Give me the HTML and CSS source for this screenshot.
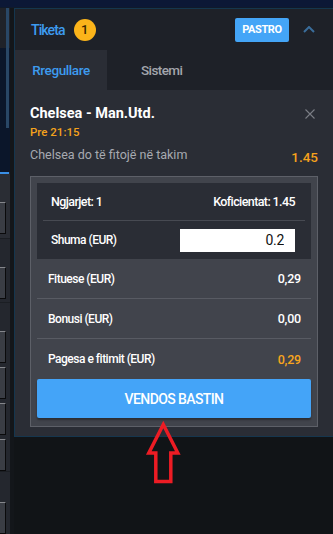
FILE: index.html
```html
<!DOCTYPE html>
<html lang="sq">
<head>
<meta charset="utf-8">
<title>Tiketa</title>
<link rel="stylesheet" href="styles.css">
</head>
<body>
<div class="topbar"></div>
<div class="main">
  <aside class="side">
    <div class="s-top"><div class="s-scroll"></div></div>
    <div class="s-line"></div>
    <div class="s-sec s-sec1"><div class="s-box"></div></div>
    <div class="s-sec s-sec2"><div class="s-box"></div></div>
    <div class="s-sec s-sec3"><div class="s-box"></div><div class="s-box"></div><div class="s-box"></div><div class="s-box"></div></div>
    <div class="s-sec s-sec4"><div class="s-box"></div></div>
  </aside>
  <div class="gutter"></div>
  <div class="col">
    <section class="panel">
      <header class="p-head">
        <span class="p-title">Tiketa</span>
        <span class="badge">1</span>
        <span class="spacer"></span>
        <button class="btn-pastro">PASTRO</button>
        <svg class="chev" viewBox="0 0 12 7" width="12" height="7"><polyline points="1,6 6,1 11,6" fill="none" stroke="#3a6d9b" stroke-width="2"/></svg>
      </header>
      <nav class="tabs">
        <div class="tab active">Rregullare</div>
        <div class="tab tab2">Sistemi</div>
      </nav>
      <div class="content">
        <div class="ev-row">
          <div class="ev-info">
            <div class="ev-name">Chelsea - Man.Utd.</div>
            <div class="ev-time">Pre 21:15</div>
          </div>
          <svg class="close" viewBox="0 0 10 10" width="10" height="10"><path d="M0.5 0.5 L9.5 9.5 M9.5 0.5 L0.5 9.5" stroke="#7b7e86" stroke-width="1.1" fill="none"/></svg>
        </div>
        <div class="pick-row">
          <span class="pick">Chelsea do të fitojë në takim</span>
          <span class="odds">1.45</span>
        </div>
        <div class="slip">
          <div class="slip-top">
            <div class="srow srow-sum"><span>Ngjarjet: 1</span><span>Koficientat: 1.45</span></div>
            <div class="srow srow-stake"><span>Shuma (EUR)</span><input class="stake" type="text" value="0.2"></div>
          </div>
          <div class="lrow"><span>Fituese (EUR)</span><span class="val">0,29</span></div>
          <div class="lrow"><span>Bonusi (EUR)</span><span class="val">0,00</span></div>
          <div class="lrow last"><span>Pagesa e fitimit (EUR)</span><span class="val val-hl">0,29</span></div>
          <button class="place">VENDOS BASTIN</button>
        </div>
      </div>
    </section>
  </div>
</div>
<svg class="arrow" viewBox="0 0 40 66" width="40" height="66"><polygon points="19.3,4.5 4.8,33 11.8,33 11.8,61.5 26.8,61.5 26.8,33 33.8,33" fill="none" stroke="#ed1c24" stroke-width="3.5" stroke-linejoin="miter"/></svg>
</body>
</html>
```
FILE: styles.css
```css
* { box-sizing: border-box; }
html, body { margin: 0; padding: 0; }
body {
  width: 333px;
  height: 534px;
  overflow: hidden;
  position: relative;
  background: #111417;
  font-family: Roboto, "Liberation Sans", sans-serif;
}
.topbar {
  height: 8px;
  background: #0c1836;
  box-shadow: inset 0 -1px 0 #101a2a;
}
.main { display: flex; height: 526px; }

/* left strip */
.side { width: 10px; display: flex; flex-direction: column; background: #24272e; }
.s-top {
  height: 167px;
  display: flex;
  background: linear-gradient(#1f2229 0 40px, #0b162a 40px);
}
.s-scroll { width: 3px; height: 120px; margin-left: 6px; background: #294766; }
.s-line { height: 2px; width: 9px; background: #3a8fe6; }
.s-sec { display: flex; flex-direction: column; gap: 4px; border-bottom: 1px solid #1b1e23; }
.s-sec1 { height: 65px; padding-top: 28px; background: #2a2d34; }
.s-sec2 { height: 65px; padding-top: 28px; background: #24272e; }
.s-sec3 { height: 171px; padding-top: 28px; background: #24272e; }
.s-sec4 { flex: 1; padding-top: 30px; background: #24272e; border-bottom: 0; }
.s-box {
  width: 6px;
  height: 32px;
  flex: none;
  background: #3a3d44;
  border: 1px solid #0a0a0b;
  border-left: 0;
  border-top-color: #85878c;
}
.gutter { width: 4px; background: #13161a; }
.col { flex: 1; display: flex; flex-direction: column; }

/* panel */
.panel { border: 1px solid #15364e; border-right: 0; }
.p-head {
  height: 41px;
  display: flex;
  align-items: center;
  padding: 0 18px 0 16px;
  background: #1e2128;
}
.p-title {
  font-size: 14px;
  font-weight: 500;
  letter-spacing: -0.9px;
  color: #3d9bef;
}
.badge {
  width: 22px;
  height: 22px;
  margin-left: 9px;
  border-radius: 50%;
  background: #fbb41a;
  display: flex;
  align-items: center;
  justify-content: center;
  font-weight: 500;
  font-size: 13px;
  color: #3b2800;
}
.spacer { flex: 1; }
.btn-pastro {
  width: 54px;
  height: 24px;
  margin-right: 14px;
  padding: 0;
  border: 0;
  border-radius: 2px;
  background: #44a5f7;
  color: #fff;
  font-family: Roboto, sans-serif;
  font-weight: bold;
  font-size: 11px;
  letter-spacing: -0.4px;
}
.chev { display: block; }

.tabs { height: 40px; display: flex; background: #1e2128; }
.tab {
  display: flex;
  align-items: center;
  font-size: 13.5px;
  font-weight: 500;
  letter-spacing: -0.4px;
  color: #a3a6ad;
}
.tab.active { width: 92px; justify-content: center; background: #2a2d35; color: #3d9bef; }
.tab2 { padding-left: 34px; letter-spacing: -0.6px; }

.content { background: #2a2d35; padding: 15px 15px 9px; }
.ev-row { display: flex; justify-content: space-between; align-items: flex-start; }
.ev-name { font-weight: 700; font-size: 14.5px; line-height: 18px; color: #fff; }
.ev-time { margin-top: 1px; font-weight: 500; font-size: 11.5px; line-height: 16px; color: #f4a21c; }
.close { display: block; margin: 4px 3px 0 0; }

.pick-row { margin-top: 6px; height: 20px; display: flex; justify-content: space-between; }
.pick { align-self: flex-start; font-size: 12.5px; line-height: 18px; color: #a7aab1; }
.odds { align-self: flex-end; font-weight: 500; font-size: 13.5px; line-height: 18px; color: #f6a21c; }

.slip {
  margin-top: 10px;
  border: 1px solid #5d6068;
  background: #41444c;
  padding: 6px 6px 8px;
  color: #fff;
}
.slip-top { background: #2a2d35; padding: 0 6px; }
.srow {
  display: flex;
  justify-content: space-between;
  align-items: center;
  padding: 0 10px 0 8px;
}
.srow-sum { height: 38px; border-bottom: 1px solid #474a52; font-size: 12.5px; font-weight: 500; letter-spacing: -0.6px; }
.srow-stake { height: 38px; font-size: 12px; font-weight: 500; letter-spacing: -0.5px; }
.stake {
  width: 115px;
  height: 23px;
  border: 0;
  border-radius: 0;
  background: #fff;
  padding: 0 11px 0 0;
  text-align: right;
  font-family: Roboto, sans-serif;
  font-size: 14px;
  letter-spacing: -0.3px;
  color: #111;
  outline: none;
}
.lrow {
  height: 40px;
  display: flex;
  justify-content: space-between;
  align-items: center;
  padding: 0 10px 0 11px;
  border-bottom: 1px solid #585b63;
  font-size: 12px;
  font-weight: 500;
  letter-spacing: -0.5px;
}
.lrow.last { border-bottom: 0; }
.val { font-size: 12.5px; letter-spacing: -0.2px; }
.val-hl { color: #f7a51d; }
.place {
  display: block;
  width: 100%;
  height: 39px;
  padding: 0;
  border: 0;
  border-radius: 2px;
  background: #44a4f8;
  box-shadow: 0 2px 2px rgba(0, 0, 0, 0.35);
  color: #fff;
  font-family: Roboto, sans-serif;
  font-weight: 500;
  font-size: 14px;
  letter-spacing: -0.6px;
}

.arrow { position: absolute; left: 144px; top: 420px; display: block; }
```
